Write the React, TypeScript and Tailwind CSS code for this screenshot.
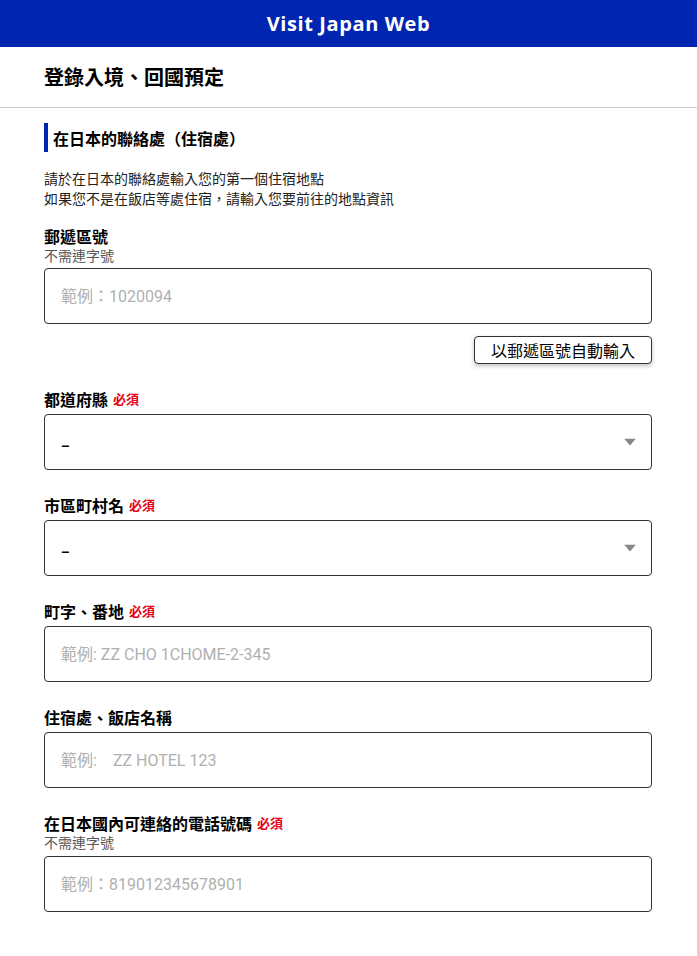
import React from 'react';

const cjk = { fontFamily: '"Noto Sans CJK TC", "Noto Sans", sans-serif' };
const latin = { fontFamily: 'Roboto, "Noto Sans CJK TC", sans-serif' };

function Required() {
  return <span className="ml-[5px] text-[13px] font-bold text-[#e60012]">必須</span>;
}

function Label({ text, required, hint }: { text: string; required?: boolean; hint?: string }) {
  return (
    <div>
      <div className="flex items-center h-[22px] text-[16px] font-bold text-black leading-[20px]">
        {text}
        {required && <Required />}
      </div>
      {hint && <div className="h-[17px] text-[14px] leading-[17px] text-[#555]">{hint}</div>}
    </div>
  );
}

function TextField({ placeholder }: { placeholder: string }) {
  return (
    <input
      type="text"
      placeholder={placeholder}
      style={latin}
      className="block w-full h-[56px] rounded-[4px] border border-[#333] bg-white px-[16px] text-[16px] text-black placeholder:text-[#b0b0b0] outline-none"
    />
  );
}

function SelectField() {
  return (
    <div className="relative flex items-center w-full h-[56px] rounded-[4px] border border-[#333] bg-white px-[16px]">
      <span className="text-[16px] font-bold text-black translate-y-[2px]">–</span>
      <svg className="absolute right-[15px] top-1/2 -translate-y-1/2" width="12" height="7" viewBox="0 0 12 7">
        <path d="M0 0h12L6 7z" fill="#888" />
      </svg>
    </div>
  );
}

export default function App() {
  return (
    <div style={cjk} className="min-h-[956px] bg-white text-black">
      <header className="h-[47px] bg-[#0025b0] flex items-center justify-center">
        <span
          style={{ fontFamily: '"Open Sans", sans-serif' }}
          className="text-white text-[20px] font-bold tracking-[0.03em]"
        >
          Visit Japan Web
        </span>
      </header>

      <div className="h-[61px] flex items-center px-[44px] border-b border-[#ccc]">
        <h1 className="text-[20px] font-bold leading-none">登錄入境、回國預定</h1>
      </div>

      <main className="pl-[44px] pr-[45px] pb-[40px]">
        <div className="mt-[15px] flex items-center h-[29px] border-l-[4px] border-[#0025b0] pl-[5px]">
          <h2 className="text-[16px] font-bold">在日本的聯絡處（住宿處）</h2>
        </div>

        <p className="mt-[16px] text-[14px] leading-[20px] text-[#222]">
          請於在日本的聯絡處輸入您的第一個住宿地點
          <br />
          如果您不是在飯店等處住宿，請輸入您要前往的地點資訊
        </p>

        <div className="mt-[17px]">
          <Label text="郵遞區號" hint="不需連字號" />
          <div className="mt-[4px]">
            <TextField placeholder="範例：1020094" />
          </div>
          <div className="mt-[12px] flex justify-end">
            <button
              type="button"
              className="h-[28px] w-[178px] rounded-[4px] border border-[#333] bg-white text-[16px] text-black shadow-[0_2px_4px_rgba(0,0,0,0.25)]"
            >
              以郵遞區號自動輸入
            </button>
          </div>
        </div>

        <div className="mt-[24px]">
          <Label text="都道府縣" required />
          <div className="mt-[4px]">
            <SelectField />
          </div>
        </div>

        <div className="mt-[24px]">
          <Label text="市區町村名" required />
          <div className="mt-[4px]">
            <SelectField />
          </div>
        </div>

        <div className="mt-[24px]">
          <Label text="町字、番地" required />
          <div className="mt-[4px]">
            <TextField placeholder="範例: ZZ CHO 1CHOME-2-345" />
          </div>
        </div>

        <div className="mt-[24px]">
          <Label text="住宿處、飯店名稱" />
          <div className="mt-[4px]">
            <TextField placeholder="範例:　ZZ HOTEL 123" />
          </div>
        </div>

        <div className="mt-[24px]">
          <Label text="在日本國內可連絡的電話號碼" required hint="不需連字號" />
          <div className="mt-[5px]">
            <TextField placeholder="範例：819012345678901" />
          </div>
        </div>
      </main>
    </div>
  );
}
